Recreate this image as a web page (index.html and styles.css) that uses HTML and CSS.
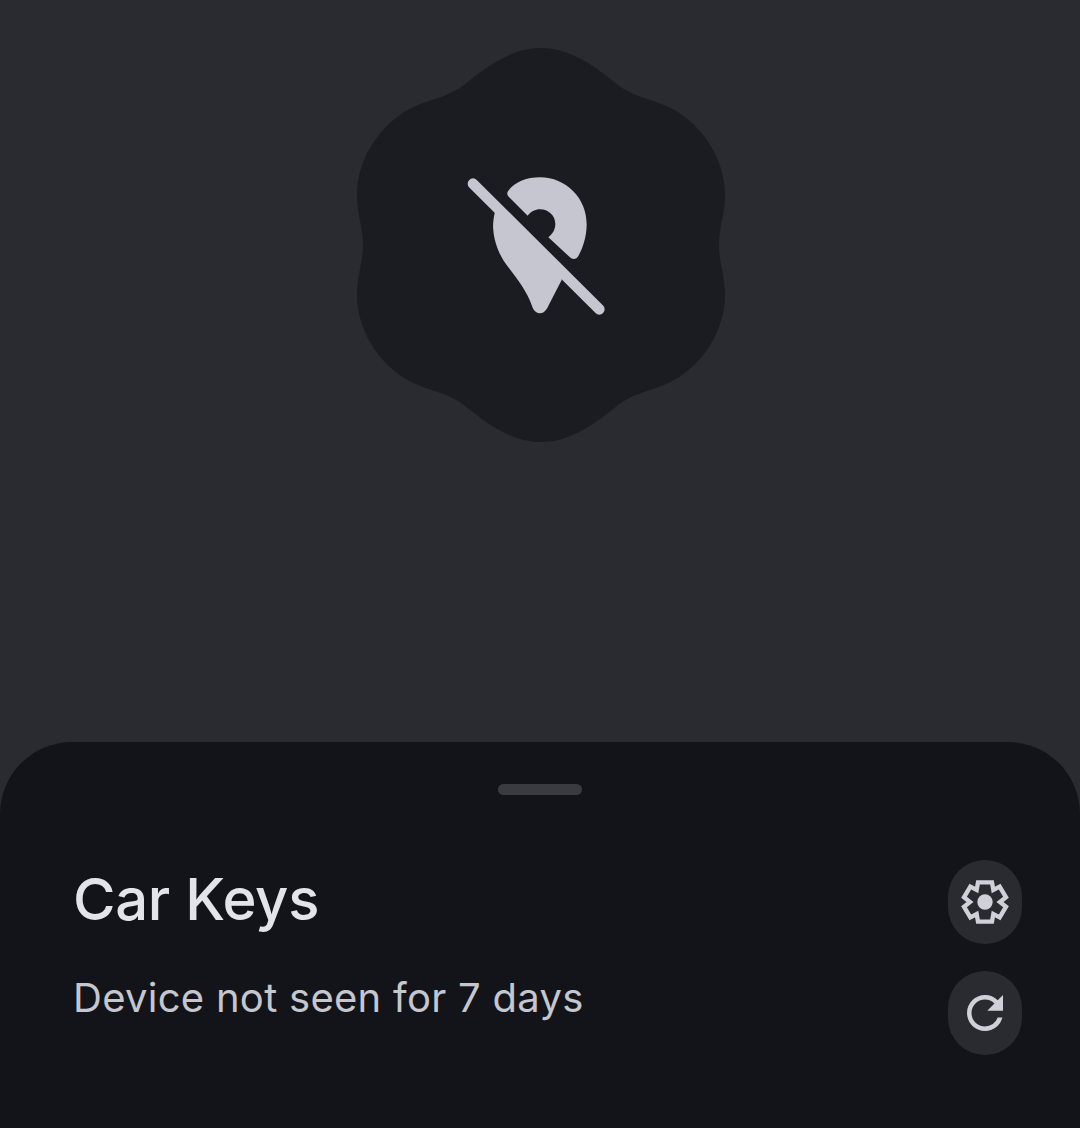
FILE: index.html
```html
<!DOCTYPE html>
<html>
	<head>
		<meta charset="utf-8">
		<title>Car Keys</title>
		<link rel="stylesheet" href="styles.css">
	</head>
	<body>
		<div class="hero">
			<svg class="badge" viewBox="-201 -200 400 400" width="400" height="400">
				<path class="badge-shape" d="M0 -197 C30 -197 55 -178 77 -160 C90 -150 105 -147 123 -140 C156 -127 184 -90 184 -50 C184 -30 178 -18 178 0 C178 18 184 30 184 50 C184 90 156 127 123 140 C105 147 90 150 77 160 C55 178 30 197 0 197 C-30 197 -55 178 -77 160 C-90 150 -105 147 -123 140 C-156 127 -184 90 -184 50 C-184 30 -178 18 -178 0 C-178 -18 -184 -30 -184 -50 C-184 -90 -156 -127 -123 -140 C-105 -147 -90 -150 -77 -160 C-55 -178 -30 -197 0 -197 Z"/>
				<g transform="translate(-101 -95) scale(0.3333)">
					<path class="pin" d="M205 122 C225 95 262 82 300 82 C378 82 440 145 440 222 C440 262 428 295 415 318 C410 328 398 330 390 322 L325 262 C338 252 346 238 346 222 C346 197 325 178 300 178 C286 178 272 185 263 197 L207 141 C201 135 200 128 205 122 Z"/>
					<path class="pin" d="M168 170 C160 205 158 225 160 240 C162 275 180 320 200 345 C230 385 262 425 275 465 C280 482 290 490 300 490 C312 490 320 480 326 466 L365 390 L365 366 Z"/>
					<line class="pin-slash" x1="99" y1="101" x2="478" y2="478"/>
				</g>
			</svg>
		</div>
		<div class="sheet">
			<div class="handle"></div>
			<div class="sheet-row">
				<div class="info">
					<h1 class="name">Car Keys</h1>
					<p class="status">Device not seen for 7 days</p>
				</div>
				<div class="actions">
					<div class="round-btn">
						<svg viewBox="0 -2 180 180" width="60" height="60">
							<path class="gear" d="M69 29 L111 29 L115 52 L134 42 L153 74 L135 88 L153 102 L134 134 L115 124 L111 147 L69 147 L65 124 L46 134 L27 102 L45 88 L27 74 L46 42 L65 52 Z"/>
							<circle cx="90" cy="88" r="23"/>
						</svg>
					</div>
					<div class="round-btn">
						<svg viewBox="0 0 24 24" width="54" height="54">
							<path d="M17.65 6.35A7.958 7.958 0 0 0 12 4c-4.42 0-7.99 3.58-7.99 8s3.57 8 7.99 8c3.73 0 6.84-2.55 7.73-6h-2.08A5.99 5.99 0 0 1 12 18c-3.31 0-6-2.69-6-6s2.69-6 6-6c1.66 0 3.14.69 4.22 1.78L13 11h7V4l-2.35 2.35z"/>
						</svg>
					</div>
				</div>
			</div>
		</div>
	</body>
</html>
```

FILE: styles.css
```css
html, body {
	margin: 0;
	height: 100%;
}

body {
	height: 1128px;
	overflow: hidden;
	display: flex;
	flex-direction: column;
	background: #2a2b30;
	font-family: "Inter", "Noto Sans", sans-serif;
}

.hero {
	height: 742px;
	padding-top: 45px;
	box-sizing: border-box;
	display: flex;
	justify-content: center;
}

.badge {
	display: block;
}

.badge-shape {
	fill: #1b1c21;
}

.pin {
	fill: #c5c6d0;
}

.pin-slash {
	stroke: #c5c6d0;
	stroke-width: 32;
	stroke-linecap: round;
}

.sheet {
	flex: 1;
	background: #131419;
	border-radius: 72px 72px 0 0;
	padding-top: 42px;
}

.handle {
	width: 84px;
	height: 11px;
	margin: 0 auto;
	border-radius: 6px;
	background: #3a3b40;
}

.sheet-row {
	display: flex;
	justify-content: space-between;
	margin-top: 65px;
	padding: 0 58px 0 73px;
}

.info {
	padding-top: 4px;
}

.name {
	margin: 0;
	font-size: 58px;
	line-height: 70px;
	font-weight: 500;
	letter-spacing: -0.3px;
	color: #e3e4e9;
}

.status {
	margin: 39px 0 0;
	font-size: 40px;
	line-height: 50px;
	font-weight: 400;
	letter-spacing: 0.28px;
	color: #c5c6ce;
}

.actions {
	display: flex;
	flex-direction: column;
	gap: 27px;
}

.round-btn {
	width: 74px;
	height: 84px;
	border-radius: 37px;
	background: #2a2b30;
	display: flex;
	align-items: center;
	justify-content: center;
}

.round-btn svg {
	fill: #d0d1d8;
}

.round-btn .gear {
	fill: none;
	stroke: #d0d1d8;
	stroke-width: 13;
	stroke-linejoin: miter;
}
```
